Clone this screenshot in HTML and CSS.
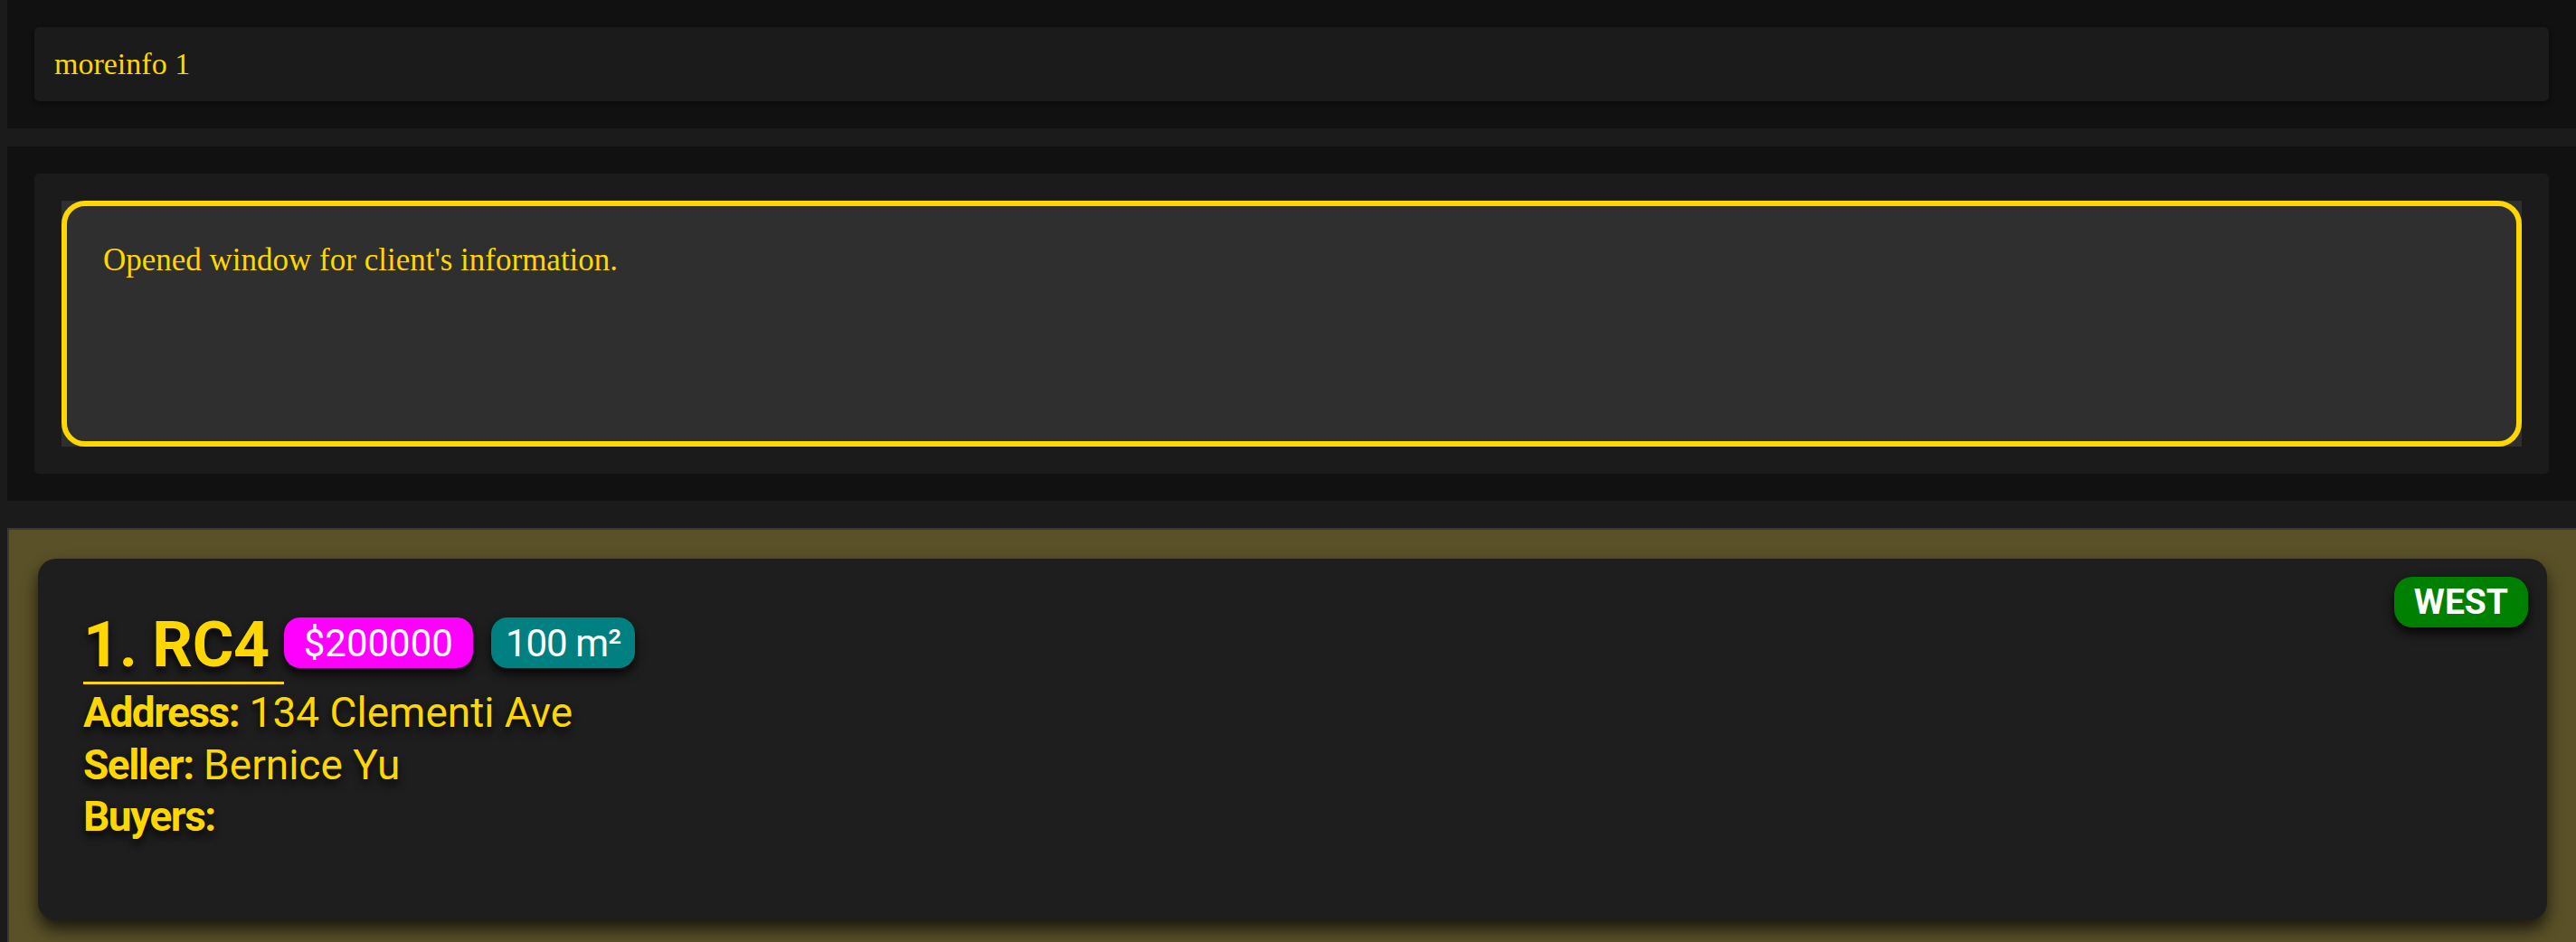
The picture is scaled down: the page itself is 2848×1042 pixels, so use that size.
FILE: index.html
```html
<!DOCTYPE html>
<html lang="en">
<head>
    <meta charset="UTF-8">
    <meta name="viewport" content="width=device-width, initial-scale=1.0">
    <title>Property Listings</title>
    <link rel="stylesheet" href="styles.css">
</head>
<body>
    <div class="panel panel-info">
        <div class="info-card">moreinfo 1</div>
    </div>

    <div class="panel panel-window">
        <div class="window-card">
            <div class="window-frame">
                <div class="window-text">Opened window for client's information.</div>
            </div>
        </div>
    </div>

    <div class="panel panel-list">
        <div class="property-card">
            <div class="property-main">
                <div class="property-head">
                    <span class="property-title">1. RC4</span>
                    <span class="tag tag-price">$200000</span>
                    <span class="tag tag-size">100 m²</span>
                </div>
                <div class="property-line"><strong>Address:</strong> 134 Clementi Ave</div>
                <div class="property-line"><strong>Seller:</strong> Bernice Yu</div>
                <div class="property-line"><strong>Buyers:</strong></div>
            </div>
            <span class="tag tag-region">WEST</span>
        </div>
    </div>
</body>
</html>
```

FILE: styles.css
```css
html, body {
    overflow: hidden;
}
body {
    margin: 0 0 0 8px;
    background-color: #1b1b1b;
    color: #ffd700;
    font-family: 'Liberation Serif', serif;
}
.panel {
    background-color: #111111;
    padding: 30px;
}
.panel-info {
    margin-bottom: 20px;
}
.panel-window {
    margin-bottom: 30px;
}
.info-card {
    height: 82px;
    display: flex;
    align-items: center;
    padding: 0 22px;
    background-color: #1b1b1b;
    border-radius: 5px;
    box-shadow: 0 2px 6px rgba(0, 0, 0, 0.45);
    font-size: 34px;
    box-sizing: border-box;
}
.window-card {
    background-color: #1b1b1b;
    border-radius: 5px;
    padding: 30px;
}
.window-frame {
    background-color: #2f2f2f;
}
.window-text {
    height: 272px;
    box-sizing: border-box;
    border: 6px solid #ffd700;
    border-radius: 26px;
    padding: 40px 40px;
    font-size: 35px;
}
.panel-list {
    background-color: #5a5128;
    border: 2px solid #383838;
    border-right: none;
    padding: 32px;
}
.property-card {
    min-height: 400px;
    box-sizing: border-box;
    display: flex;
    justify-content: space-between;
    align-items: flex-start;
    padding: 20px 21px 20px 50px;
    background-color: #1e1e1e;
    border-radius: 20px;
    box-shadow: 0 10px 18px rgba(0, 0, 0, 0.7);
    font-family: 'Roboto', sans-serif;
}
.property-main {
    margin-top: 34px;
}
.property-head {
    display: flex;
    align-items: flex-start;
    margin-bottom: 3px;
}
.property-title {
    font-size: 70px;
    font-weight: bold;
    line-height: 82px;
    letter-spacing: -0.5px;
    padding-right: 16px;
    border-bottom: 3px solid #ffd700;
    text-shadow: 0 6px 10px rgba(0, 0, 0, 0.8);
}
.tag {
    display: inline-flex;
    align-items: center;
    height: 56px;
    border-radius: 18px;
    color: white;
    box-shadow: 0 6px 12px rgba(0, 0, 0, 0.85);
}
.tag-price {
    margin-top: 11px;
    padding: 0 22px;
    background-color: #ff00ff;
    font-size: 42px;
}
.tag-size {
    margin-top: 11px;
    margin-left: 20px;
    padding: 0 16px;
    background-color: #008080;
    font-size: 42px;
    letter-spacing: -1px;
}
.tag-region {
    padding: 0 22px;
    border-radius: 20px;
    background-color: #008000;
    font-size: 39px;
    font-weight: bold;
}
.property-line {
    font-size: 46px;
    line-height: 57.5px;
    text-shadow: 0 6px 10px rgba(0, 0, 0, 0.8);
}
.property-line strong {
    letter-spacing: -1.5px;
}
```
